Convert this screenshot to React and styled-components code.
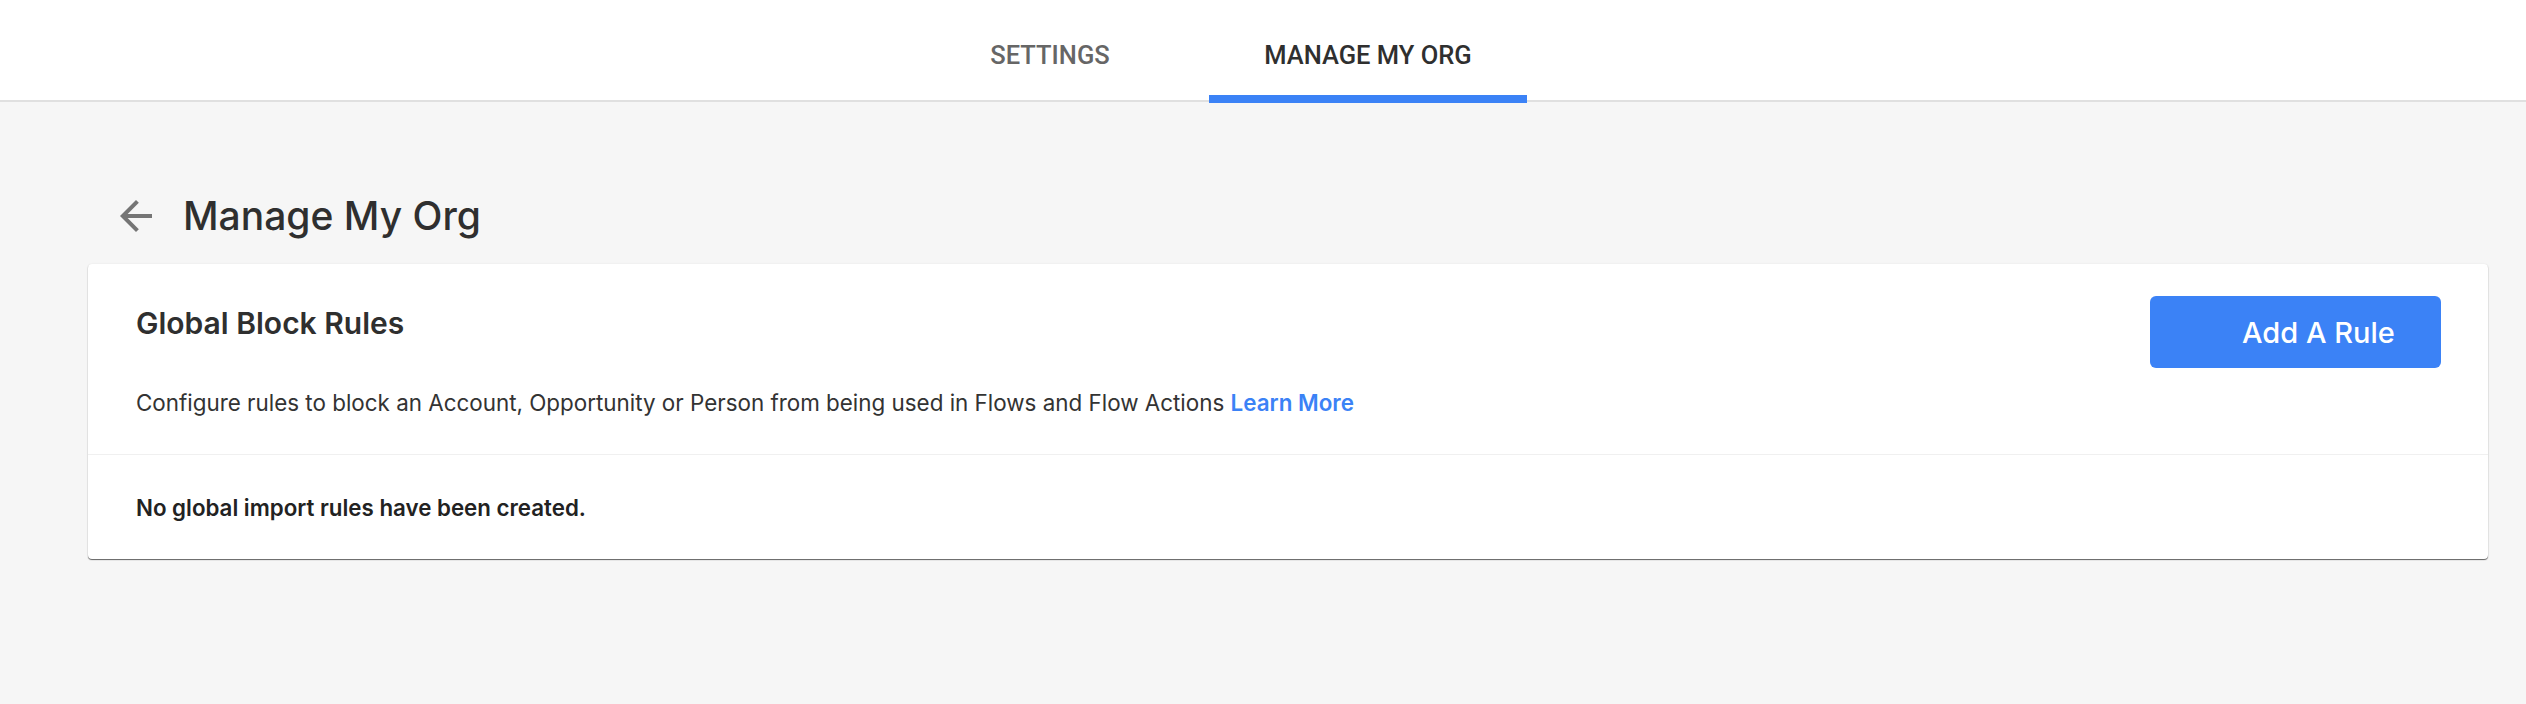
import React from "react";
import styled, { createGlobalStyle } from "styled-components";

const GlobalStyle = createGlobalStyle`
  html, body { margin: 0; padding: 0; }
  body {
    background: #f6f6f6;
    font-family: "Inter", "Roboto", sans-serif;
    color: #333;
    min-height: 704px;
  }
`;

const Header = styled.header`
  height: 100px;
  background: #fff;
  border-bottom: 2px solid #e0e0e0;
  display: flex;
  align-items: flex-start;
  padding-left: 891px;
`;

const Tab = styled.div`
  box-sizing: border-box;
  width: 318px;
  height: 103px;
  padding-top: 40px;
  display: flex;
  justify-content: center;
  border-bottom: 8px solid ${(p) => (p.$active ? "#3b82f6" : "transparent")};
  font-family: "Roboto", sans-serif;
  font-weight: 500;
  font-size: 25.5px;
  line-height: 30px;
  color: ${(p) => (p.$active ? "#2f2f2f" : "#666")};
`;

const Main = styled.main`
  padding: 90px 38px 0 88px;
`;

const TitleRow = styled.div`
  display: flex;
  align-items: center;
  gap: 23px;
  height: 48px;
  padding-left: 24px;
`;

const BackIcon = styled.svg`
  width: 48px;
  height: 48px;
  fill: #757575;
  flex: none;
`;

const PageTitle = styled.h1`
  margin: 0;
  font-family: "Inter", sans-serif;
  font-weight: 500;
  font-size: 39px;
  line-height: 48px;
  color: #2f2f2f;
`;

const Card = styled.section`
  margin-top: 24px;
  background: #fff;
  border-radius: 4px;
  box-shadow: 0 1px 1px rgba(0, 0, 0, 0.6), 0 0 2px rgba(0, 0, 0, 0.08);
`;

const CardHeader = styled.div`
  display: flex;
  justify-content: space-between;
  align-items: flex-start;
  padding: 32px 47px 35px 48px;
  border-bottom: 1px solid #f0f0f0;
`;

const HeaderText = styled.div`
  display: flex;
  flex-direction: column;
  gap: 46px;
  padding-top: 9px;
`;

const CardTitle = styled.h2`
  margin: 0;
  font-family: "Inter", sans-serif;
  font-weight: 600;
  font-size: 30px;
  line-height: 36px;
  color: #2f2f2f;
`;

const Description = styled.p`
  margin: 0;
  font-family: "Inter", sans-serif;
  font-weight: 400;
  font-size: 22.4px;
  line-height: 32px;
  color: #333;
`;

const Link = styled.a`
  color: #3b82f6;
  font-weight: 600;
  text-decoration: none;
`;

const AddButton = styled.button`
  box-sizing: border-box;
  width: 291px;
  height: 72px;
  padding: 0 45px 0 92px;
  display: flex;
  align-items: center;
  border: none;
  border-radius: 6px;
  background: #3b82f6;
  color: #fff;
  font-family: "Inter", sans-serif;
  font-weight: 500;
  font-size: 29px;
  cursor: pointer;
`;

const EmptyState = styled.div`
  padding: 38px 48px 36px;
  font-family: "Inter", sans-serif;
  font-weight: 600;
  font-size: 22.3px;
  line-height: 30px;
  color: #222;
`;

export default function App() {
  return (
    <>
      <GlobalStyle />
      <Header>
        <Tab>SETTINGS</Tab>
        <Tab $active>MANAGE MY ORG</Tab>
      </Header>
      <Main>
        <TitleRow>
          <BackIcon viewBox="0 0 24 24" aria-hidden="true">
            <path d="M20 11H7.83l5.59-5.59L12 4l-8 8 8 8 1.41-1.41L7.83 13H20v-2z" />
          </BackIcon>
          <PageTitle>Manage My Org</PageTitle>
        </TitleRow>
        <Card>
          <CardHeader>
            <HeaderText>
              <CardTitle>Global Block Rules</CardTitle>
              <Description>
                Configure rules to block an Account, Opportunity or Person from being used in Flows and Flow Actions{" "}
                <Link href="#">Learn More</Link>
              </Description>
            </HeaderText>
            <AddButton>Add A Rule</AddButton>
          </CardHeader>
          <EmptyState>No global import rules have been created.</EmptyState>
        </Card>
      </Main>
    </>
  );
}
